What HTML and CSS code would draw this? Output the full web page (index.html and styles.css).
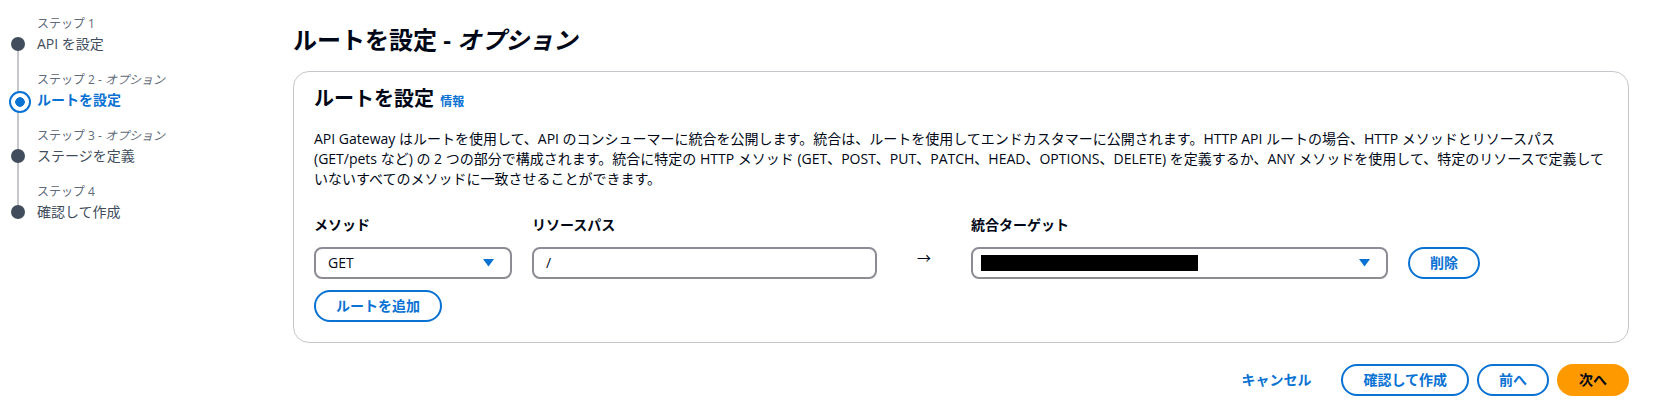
FILE: index.html
```html
<!DOCTYPE html>
<html lang="ja">
<head>
<meta charset="utf-8">
<title>ルートを設定 - オプション</title>
<link rel="stylesheet" href="styles.css">
</head>
<body>
<div class="page">
  <nav class="steps">
    <ol class="step-list">
      <li class="step done">
        <span class="step-num">ステップ 1</span>
        <span class="step-name">API を設定</span>
      </li>
      <li class="step active">
        <span class="step-num">ステップ 2 - <i>オプション</i></span>
        <span class="step-name">ルートを設定</span>
      </li>
      <li class="step">
        <span class="step-num">ステップ 3 - <i>オプション</i></span>
        <span class="step-name">ステージを定義</span>
      </li>
      <li class="step last">
        <span class="step-num">ステップ 4</span>
        <span class="step-name">確認して作成</span>
      </li>
    </ol>
  </nav>

  <main class="main">
    <h1 class="title">ルートを設定 - <i>オプション</i></h1>

    <section class="card">
      <h2 class="card-title">ルートを設定 <a class="info" href="#">情報</a></h2>
      <p class="desc">API Gateway はルートを使用して、API のコンシューマーに統合を公開します。統合は、ルートを使用してエンドカスタマーに公開されます。HTTP API ルートの場合、HTTP メソッドとリソースパス (GET/pets など) の 2 つの部分で構成されます。統合に特定の HTTP メソッド (GET、POST、PUT、PATCH、HEAD、OPTIONS、DELETE) を定義するか、ANY メソッドを使用して、特定のリソースで定義していないすべてのメソッドに一致させることができます。</p>

      <div class="route-grid">
        <label class="field-label">メソッド</label>
        <label class="field-label">リソースパス</label>
        <span></span>
        <label class="field-label">統合ターゲット</label>
        <span></span>

        <div class="select">
          <span class="select-value">GET</span>
          <svg class="caret" width="11" height="8" viewBox="0 0 11 8"><polygon points="0,0 11,0 5.5,7.5" fill="#0972d3"/></svg>
        </div>
        <div class="input">/</div>
        <span class="arrow">→</span>
        <div class="select">
          <span class="redacted"></span>
          <svg class="caret" width="11" height="8" viewBox="0 0 11 8"><polygon points="0,0 11,0 5.5,7.5" fill="#0972d3"/></svg>
        </div>
        <button class="btn">削除</button>
      </div>

      <button class="btn add-btn">ルートを追加</button>
    </section>

    <div class="footer">
      <button class="btn link">キャンセル</button>
      <button class="btn">確認して作成</button>
      <button class="btn">前へ</button>
      <button class="btn primary">次へ</button>
    </div>
  </main>
</div>
</body>
</html>
```

FILE: styles.css
```css
* { box-sizing: border-box; }

body {
  margin: 0;
  background: #ffffff;
  color: #000716;
  font-family: "Open Sans", "Noto Sans CJK JP", sans-serif;
  font-size: 14px;
  line-height: 20px;
}

.page {
  display: flex;
  align-items: flex-start;
}

/* ---------- steps sidebar ---------- */
.steps {
  width: 293px;
  flex: none;
  padding-top: 16px;
}

.step-list {
  list-style: none;
  margin: 0;
  padding: 0;
}

.step {
  position: relative;
  display: flex;
  flex-direction: column;
  padding-left: 37px;
  height: 56px;
}

.step-num {
  font-size: 12px;
  line-height: 16px;
  color: #5f6b7a;
  margin-bottom: 2px;
}

.step-name {
  font-size: 14px;
  line-height: 20px;
  color: #414d5c;
}

/* dot */
.step::before {
  content: "";
  position: absolute;
  left: 11px;
  top: 21px;
  width: 14px;
  height: 14px;
  border-radius: 50%;
  background: #414d5c;
  z-index: 1;
}

/* connector line to next step */
.step::after {
  content: "";
  position: absolute;
  left: 17px;
  top: 28px;
  width: 2px;
  height: 56px;
  background: #c6c6cd;
}

.step.last::after { display: none; }

.step.active::before {
  left: 9px;
  top: 19px;
  width: 18px;
  height: 18px;
  background: radial-gradient(circle, #0972d3 0 4.5px, #ffffff 5px 100%);
  border: 2.5px solid #0972d3;
}

.step.active .step-name {
  color: #0972d3;
  font-weight: 700;
}

/* ---------- main ---------- */
.main {
  flex: 1;
  min-width: 0;
  padding: 25px 34px 0 0;
}

.title {
  margin: 0;
  font-size: 24px;
  line-height: 30px;
  font-weight: 700;
}

.card {
  margin-top: 16px;
  border: 1px solid #c6c6cd;
  border-radius: 16px;
  padding: 14px 20px 20px 20px;
}

.card-title {
  margin: 0;
  font-size: 20px;
  line-height: 26px;
  font-weight: 700;
}

.info {
  font-size: 12px;
  font-weight: 700;
  color: #0972d3;
  text-decoration: none;
  margin-left: 1px;
}

.desc {
  margin: 14px 0 0 0;
  font-size: 14px;
  line-height: 20px;
}

.route-grid {
  margin-top: 26px;
  display: grid;
  grid-template-columns: 198px 345px 54px 417px 72px;
  column-gap: 20px;
  row-gap: 12px;
  align-items: center;
}

.field-label {
  font-weight: 700;
  font-size: 14px;
  line-height: 20px;
}

.select, .input {
  height: 32px;
  border: 2px solid #8c8c94;
  border-radius: 8px;
  display: flex;
  align-items: center;
  padding: 0 12px;
  font-size: 14px;
}

.select {
  justify-content: space-between;
  padding-right: 16px;
}

.select .redacted {
  display: block;
  width: 217px;
  height: 16px;
  background: #000000;
  margin-left: -4px;
}

.caret { display: block; }

.arrow {
  text-align: center;
  font-size: 14px;
  color: #000716;
  margin-top: -10px;
}

.btn {
  height: 32px;
  padding: 0 20px;
  border: 2px solid #0972d3;
  border-radius: 20px;
  background: #ffffff;
  color: #0972d3;
  font-family: "Open Sans", "Noto Sans CJK JP", sans-serif;
  font-size: 14px;
  font-weight: 700;
  line-height: 20px;
  cursor: pointer;
}

.add-btn {
  margin-top: 11px;
}

.footer {
  display: flex;
  justify-content: flex-end;
  gap: 8px;
  margin-top: 21px;
}

.btn.link {
  border-color: transparent;
  background: transparent;
}

.btn.primary {
  background: #ff9900;
  border-color: #ff9900;
  color: #000716;
}
```
